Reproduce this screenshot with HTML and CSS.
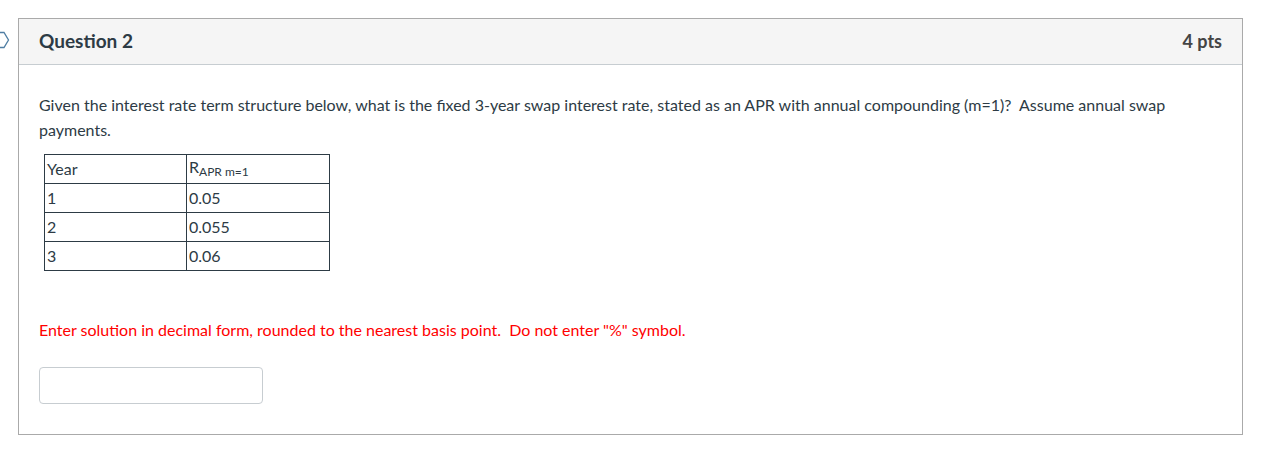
FILE: index.html
```html
<!DOCTYPE html>
<html>
<head>
  <title>Question 2</title>
  <link rel="stylesheet" href="styles.css">
</head>
<body>
  <div class="flag">
    <svg width="10" height="18" viewBox="0 0 10 18">
      <path d="M-2 1.5 H4 L8.5 9 L4 16.5 H-2" fill="none" stroke="#4f7ea3" stroke-width="1.3"/>
    </svg>
  </div>

  <div class="question">
    <div class="header">
      <span class="title">Question 2</span>
      <span class="points">4 pts</span>
    </div>

    <div class="content">
      <p class="text">Given the interest rate term structure below, what is the fixed 3-year swap interest rate, stated as an APR with annual compounding (m=1)?&nbsp; Assume annual swap payments.</p>

      <table class="rates">
        <tr>
          <td class="year">Year</td>
          <td>R<sub>APR m=1</sub></td>
        </tr>
        <tr>
          <td class="year">1</td>
          <td>0.05</td>
        </tr>
        <tr>
          <td class="year">2</td>
          <td>0.055</td>
        </tr>
        <tr>
          <td class="year">3</td>
          <td>0.06</td>
        </tr>
      </table>

      <p class="note">Enter solution in decimal form, rounded to the nearest basis point.&nbsp; Do not enter "%" symbol.</p>

      <input class="answer" type="text">
    </div>
  </div>
</body>
</html>
```

FILE: styles.css
```css
body {
  margin: 0;
  font-family: Lato, "Open Sans", sans-serif;
  color: #2d3b45;
  background-color: #fff;
}

.flag {
  position: absolute;
  left: 0;
  top: 31px;
}

.question {
  margin: 18px 0 0 18px;
  width: 1223px;
  border: 1px solid #aaa;
}

.header {
  display: flex;
  justify-content: space-between;
  align-items: center;
  height: 43px;
  padding: 0 20px 2px 20px;
  background-color: #f5f5f5;
  border-bottom: 1px solid #c7cdd1;
}

.title {
  font-size: 19px;
  font-weight: bold;
}

.points {
  font-size: 18px;
  font-weight: bold;
  color: #444;
}

.content {
  padding: 27px 20px 30px 20px;
}

.text {
  margin: 0 0 12px 0;
  font-size: 16px;
  line-height: 25px;
}

.rates {
  border-collapse: collapse;
  margin-left: 5px;
  font-size: 16px;
}

.rates td {
  border: 1px solid #2d3b45;
  width: 138px;
  height: 26px;
  padding: 0 2px 2px 2px;
  vertical-align: middle;
}

.rates .year {
  width: 137px;
}

.rates sub {
  font-size: 12px;
  vertical-align: -3px;
}

.note {
  margin: 46px 0 25px 0;
  font-size: 16px;
  line-height: 25px;
  color: #f00;
}

.answer {
  display: block;
  padding: 0;
  border: 1px solid #c7cdd1;
  border-radius: 4px;
  box-sizing: border-box;
  width: 224px;
  height: 37px;
}
```
